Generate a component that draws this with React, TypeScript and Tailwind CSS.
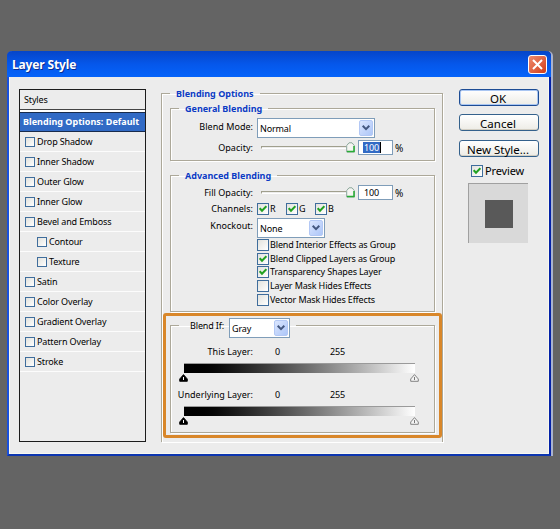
import React from 'react';
import { clsx } from 'clsx';

const styles = [
  { name: 'Drop Shadow' },
  { name: 'Inner Shadow' },
  { name: 'Outer Glow' },
  { name: 'Inner Glow' },
  { name: 'Bevel and Emboss' },
  { name: 'Contour', nested: true },
  { name: 'Texture', nested: true },
  { name: 'Satin' },
  { name: 'Color Overlay' },
  { name: 'Gradient Overlay' },
  { name: 'Pattern Overlay' },
  { name: 'Stroke' },
];

const advancedOptions = [
  { name: 'Blend Interior Effects as Group', checked: false },
  { name: 'Blend Clipped Layers as Group', checked: true },
  { name: 'Transparency Shapes Layer', checked: true },
  { name: 'Layer Mask Hides Effects', checked: false },
  { name: 'Vector Mask Hides Effects', checked: false },
];

const Checkbox: React.FC<{ checked?: boolean; small?: boolean }> = ({ checked, small }) => (
  <span
    className={clsx(
      'flex shrink-0 items-center justify-center border border-[#3f6d9c] bg-linear-to-br from-[#e2e2dd] to-white',
      small ? 'size-[10px]' : 'size-3'
    )}
  >
    {checked && (
      <svg viewBox="0 0 8 8" className="size-2" fill="none" stroke="#21a121" strokeWidth="2">
        <path d="M0.7 3.2 L3 5.7 L7.4 1.2" />
      </svg>
    )}
  </span>
);

const Select: React.FC<{ value: string; className?: string }> = ({ value, className }) => (
  <div className={clsx('flex h-5 shrink-0 items-center justify-between border border-[#7f9db9] bg-white pl-[2px] pr-px', className)}>
    <span className="pt-px">{value}</span>
    <span className="flex h-4 w-[14px] items-center justify-center rounded-[2px] border border-[#b3c8f5] bg-linear-to-br from-[#dbe6fe] to-[#adc6f8]">
      <svg viewBox="0 0 8 6" className="h-[6px] w-2" fill="none" stroke="#43577f" strokeWidth="2">
        <path d="M0.7 0.8 L4 4.1 L7.3 0.8" />
      </svg>
    </span>
  </div>
);

const Label: React.FC<{ children: React.ReactNode }> = ({ children }) => (
  <span className="w-[82px] shrink-0 text-right tracking-[0.03px]">{children}</span>
);

const OpacityRow: React.FC<{ label: string; selected?: boolean }> = ({ label, selected }) => (
  <div className="flex h-[15px] items-center">
    <Label>{label}</Label>
    <div className="ml-2 flex w-[94px] items-center">
      <span className="h-[3px] w-[85px] border-l border-t border-[#a09f8d] border-b border-b-white" />
      <svg viewBox="0 0 9 11" className="h-[11px] w-[9px]">
        <path d="M0.7 3.6 L3 0.8 H6 L8.3 3.6 V10 H0.7 Z" fill="#f5f5f2" stroke="#8ba79a" />
        <path d="M1 9.5 H8 V4" fill="none" stroke="#27ac35" strokeWidth="1.5" />
      </svg>
    </div>
    <div className="ml-[3px] flex h-[15px] w-[35px] items-center border border-[#7f9db9] bg-white pl-1">
      <span className={clsx('h-[11px] px-px leading-[11px] tracking-[-0.2px]', selected && 'border-r border-black bg-[#316ac5] text-white')}>100</span>
    </div>
    <span className="ml-[2px] text-[10px]">%</span>
  </div>
);

const Group: React.FC<{ title: string; className?: string; children: React.ReactNode }> = ({ title, className, children }) => (
  <fieldset className={clsx('border border-[#aca899] shadow-[1px_1px_0_#fff,inset_1px_1px_0_#fff]', className)}>
    <legend className="ml-2 h-3 whitespace-nowrap px-[6px] text-[9px] font-bold leading-[13px] tracking-normal text-[#0b3bc4]">{title}</legend>
    {children}
  </fieldset>
);

const Handle: React.FC<{ dark?: boolean }> = ({ dark }) => (
  <svg viewBox="0 0 9 8" className="h-2 w-[9px]">
    <path d="M4.5 0.6 L8.3 5 V7.3 H0.7 V5 Z" fill={dark ? '#000' : '#f4f4f4'} stroke={dark ? '#000' : '#777'} strokeWidth="0.9" />
    <path d="M4.5 3 V6" stroke={dark ? '#fff' : '#777'} />
  </svg>
);

const BlendRange: React.FC<{ label: string }> = ({ label }) => (
  <div>
    <div className="flex h-3 items-center">
      <Label>{label}</Label>
      <span className="ml-[22px] w-[55px]">0</span>
      <span>255</span>
    </div>
    <div className="ml-[13px] mt-[5px] h-[10px] w-[231px] border-t border-[#9a9a9a] bg-linear-to-r from-black to-white" />
    <div className="ml-2 mt-px flex w-[240px] justify-between">
      <Handle dark />
      <Handle />
    </div>
  </div>
);

const DialogButton: React.FC<{ children: React.ReactNode; primary?: boolean }> = ({ children, primary }) => (
  <button
    className={clsx(
      'flex h-[17px] w-20 items-center justify-center rounded-[3px] border bg-linear-to-b from-white to-[#edece6] pr-[2px] pt-[2px] text-[11.5px] leading-none tracking-normal',
      primary ? 'border-[#1d4c94] shadow-[inset_0_0_0_1px_#a9c6f2]' : 'border-[#34618c] shadow-[inset_0_-1px_0_#d2cec2]'
    )}
  >
    {children}
  </button>
);

const StylesList: React.FC = () => (
  <div className="h-[353px] w-[127px] shrink-0 border border-[#1c1c1c]">
    <div className="flex h-[19px] items-center pl-1">Styles</div>
    <div className="h-[3px] border-t border-[#444] bg-white" />
    <div className="flex h-5 items-center whitespace-nowrap border-y border-[#182b4c] bg-[#316ac5] pl-[3px] text-[9px] font-bold tracking-[0.02px] text-white">
      Blending Options: Default
    </div>
    {styles.map((style) => (
      <div
        key={style.name}
        className={clsx('flex h-5 items-center gap-[2px] border-b border-[#fcfcfc]', style.nested ? 'pl-[17px]' : 'pl-[5px]')}
      >
        <Checkbox small />
        <span>{style.name}</span>
      </div>
    ))}
  </div>
);

const App: React.FC = () => (
  <div className="h-[529px] w-[560px] bg-[#646464] pl-[7px] pt-[51px] font-['Noto_Sans','Open_Sans',sans-serif] text-[9px] leading-3 tracking-[-0.14px] text-black">
    <div className="h-[405px] w-[546px] rounded-t-[5px] border-r-2 border-[#aab3cf]">
      <div className="flex h-full flex-col rounded-t-[5px] border-b-2 border-l-2 border-r-2 border-b-[#0c35b0] border-l-[#1a50dd] border-r-[#0422a8] bg-[#ececec]">
        <div className="-mx-[2px] flex h-[26px] shrink-0 items-center justify-between rounded-t-[5px] bg-linear-to-b from-[#0645c8] via-[#0557ea] to-[#0563fa] pl-[5px] pr-1">
          <h1 className="pt-[2px] text-[12px] font-bold text-white [text-shadow:1px_1px_0_#0a2e90]">Layer Style</h1>
          <span className="flex size-[19px] items-center justify-center rounded-[3px] border border-white bg-linear-to-br from-[#ef8a6c] to-[#d03a14]">
            <svg viewBox="0 0 11 11" className="size-[11px]" stroke="#fff" strokeWidth="2">
              <path d="M1 1 L10 10 M10 1 L1 10" />
            </svg>
          </span>
        </div>

        <div className="flex min-h-0 flex-1 items-start border-x border-b border-[#f8f8ef] pl-[9px] pt-3">
          <StylesList />

          <Group title="Blending Options" className="-mt-[2px] ml-[15px] h-[355px] w-[282px] shrink-0 border-b-0">
            <Group title="General Blending" className="ml-2 mt-[3px] h-[59px] w-[265px]">
              <div className="mt-1 flex h-5">
                <Label>
                  <span className="block pt-[3px]">Blend Mode:</span>
                </Label>
                <Select value="Normal" className="ml-1 w-[118px]" />
              </div>
              <div className="mt-[2px]">
                <OpacityRow label="Opacity:" selected />
              </div>
            </Group>

            <Group title="Advanced Blending" className="ml-2 mt-2 h-[143px] w-[265px]">
              <div className="pt-1">
                <OpacityRow label="Fill Opacity:" />
              </div>
              <div className="mt-[3px] flex h-3 items-center">
                <Label>Channels:</Label>
                <div className="ml-1 flex">
                  {['R', 'G', 'B'].map((channel) => (
                    <div key={channel} className="flex w-[29px] items-center gap-px">
                      <Checkbox checked />
                      <span>{channel}</span>
                    </div>
                  ))}
                </div>
              </div>
              <div className="mt-[3px] flex h-5">
                <Label>
                  <span className="block pt-[2px]">Knockout:</span>
                </Label>
                <Select value="None" className="ml-1 w-[68px]" />
              </div>
              <div className="ml-[86px] flex flex-col">
                {advancedOptions.map((option) => (
                  <div key={option.name} className="flex h-[13.7px] items-center gap-px">
                    <Checkbox checked={option.checked} />
                    <span className="whitespace-nowrap">{option.name}</span>
                  </div>
                ))}
              </div>
            </Group>

            {/* Highlighted "Blend If" section */}
            <div className="mt-px ml-px h-[125px] w-[279px] rounded-[3px] border-3 border-[#d9872a]">
              <fieldset className="ml-1 mt-[1px] h-[116px] w-[265px] border border-[#aca899] shadow-[1px_1px_0_#fff,inset_1px_1px_0_#fff]">
                <legend className="ml-2 flex h-4 w-[117px] items-start">
                  <span className="ml-[11px] w-[39px] whitespace-nowrap pt-[3px]">Blend If:</span>
                  <Select value="Gray" className="mt-px w-[61px]" />
                </legend>
                <div className="mt-[13px]">
                  <BlendRange label="This Layer:" />
                </div>
                <div className="mt-[7px]">
                  <BlendRange label="Underlying Layer:" />
                </div>
              </fieldset>
            </div>
          </Group>

          <div className="ml-4 flex flex-col">
            <div className="flex flex-col gap-2">
              <DialogButton primary>OK</DialogButton>
              <DialogButton>Cancel</DialogButton>
              <div className="pt-px">
                <DialogButton>New Style...</DialogButton>
              </div>
            </div>
            <div className="ml-3 mt-[7px] flex items-center gap-[2px]">
              <Checkbox checked />
              <span className="pt-px text-[11px]">Preview</span>
            </div>
            <div className="ml-[9px] mt-[6px] flex size-[60px] items-center justify-center border-l border-t border-[#a0a0a0] bg-[#d9d9d9]">
              <div className="size-7 bg-[#595959]" />
            </div>
          </div>
        </div>
      </div>
    </div>
  </div>
);

export default App;
